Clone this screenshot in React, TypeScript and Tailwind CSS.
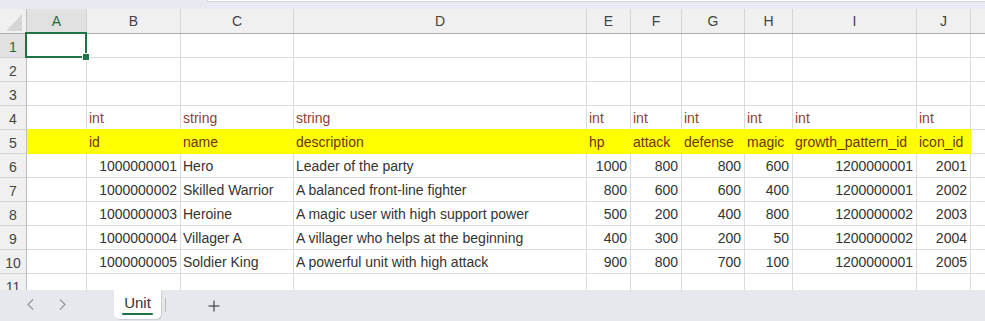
import React from "react";

type Col = { letter: string; w: string };

const cols: Col[] = [
  { letter: "A", w: "w-[60px]" },
  { letter: "B", w: "w-[94px]" },
  { letter: "C", w: "w-[113px]" },
  { letter: "D", w: "w-[293px]" },
  { letter: "E", w: "w-[44px]" },
  { letter: "F", w: "w-[51px]" },
  { letter: "G", w: "w-[63px]" },
  { letter: "H", w: "w-[48px]" },
  { letter: "I", w: "w-[124px]" },
  { letter: "J", w: "w-[54px]" },
];

const types = ["", "int", "string", "string", "int", "int", "int", "int", "int", "int"];
const names = ["", "id", "name", "description", "hp", "attack", "defense", "magic", "growth_pattern_id", "icon_id"];

const data: string[][] = [
  ["", "1000000001", "Hero", "Leader of the party", "1000", "800", "800", "600", "1200000001", "2001"],
  ["", "1000000002", "Skilled Warrior", "A balanced front-line fighter", "800", "600", "600", "400", "1200000001", "2002"],
  ["", "1000000003", "Heroine", "A magic user with high support power", "500", "200", "400", "800", "1200000002", "2003"],
  ["", "1000000004", "Villager A", "A villager who helps at the beginning", "400", "300", "200", "50", "1200000002", "2004"],
  ["", "1000000005", "Soldier King", "A powerful unit with high attack", "900", "800", "700", "100", "1200000001", "2005"],
];

const rightCols = new Set([1, 4, 5, 6, 7, 8, 9]);

function RowHeader({ n, selected, short }: { n: number; selected?: boolean; short?: boolean }) {
  return (
    <div
      className={
        "w-[27px] shrink-0 border-r border-r-[#bfbfbf] text-center " +
        (short ? "h-[16px] leading-[26px] " : "h-[24px] border-b border-b-[#d4d4d4] leading-[26px] ") +
        (selected ? "bg-[#e1e1e1] text-[#1d6b40]" : "bg-[#f0f0f0] text-[#444444]")
      }
    >
      {n}
    </div>
  );
}

function Row({
  n,
  values,
  kind,
}: {
  n: number;
  values: string[];
  kind: "blank" | "type" | "name" | "data" | "short";
}) {
  return (
    <div className="flex">
      <RowHeader n={n} selected={n === 1} short={kind === "short"} />
      {cols.map((c, i) => {
        const right = kind === "data" && rightCols.has(i);
        let cls =
          c.w +
          " shrink-0 border-r whitespace-nowrap overflow-visible " +
          (n === 1 && i === 0 ? "relative " : "") +
          (kind === "short" ? "h-[16px] " : "h-[24px] border-b ");
        if (kind === "name") {
          cls += "bg-[#ffff00] border-[#ffff00] text-[#6e3413] ";
        } else if (kind === "type") {
          cls += "border-r-[#dadada] border-b-[#ffff00] text-[#8f3f33] ";
        } else {
          cls += "border-[#dadada] text-[#333333] ";
        }
        cls += right ? "text-right pr-[3px] " : "pl-[2px] ";
        return (
          <div key={c.letter} className={cls}>
            <span className="leading-[25px] block">{values[i]}</span>
            {n === 1 && i === 0 && (
              <>
                <div className="absolute z-10 left-[-2px] top-[-2px] w-[62px] h-[26px] border-2 border-[#217346] pointer-events-none" />
                <div className="absolute z-20 left-[55px] top-[19px] w-[8px] h-[8px] bg-[#217346] border border-white" />
              </>
            )}
          </div>
        );
      })}
      <div
        className={
          "w-[14px] shrink-0 " + (kind === "short" ? "h-[16px]" : "h-[24px] border-b border-[#dadada]")
        }
      />
    </div>
  );
}

export default function App() {
  const empty = new Array(10).fill("");
  return (
    <div className="w-[985px] h-[321px] overflow-hidden bg-white font-['Liberation_Sans',Arial,sans-serif] text-[14px] flex flex-col">
      {/* top strip */}
      <div className="h-[9px] bg-[#e7eaf0] flex shrink-0">
        <div className="ml-[207px] flex-1 h-[2px] bg-white border-b border-l border-[#cfd2d8] rounded-bl-[3px]" />
      </div>

      {/* column headers */}
      <div className="flex h-[25px] shrink-0 border-b border-[#ababab] bg-[#f0f0f0]">
        <div className="w-[27px] shrink-0 border-r border-r-[#bfbfbf] flex items-end justify-end pr-[4px] pb-[2px]">
          <svg width="16" height="17" viewBox="0 0 16 17">
            <polygon points="16,0 16,17 0,17" fill="#d6d6d6" />
          </svg>
        </div>
        {cols.map((c, i) => (
          <div
            key={c.letter}
            className={
              c.w +
              " shrink-0 border-r border-[#d5d5d5] text-center leading-[24px] " +
              (i === 0 ? "bg-[#e1e1e1] text-[#1d6b40]" : "text-[#444444]")
            }
          >
            {c.letter}
          </div>
        ))}
        <div className="w-[14px] shrink-0" />
      </div>

      <Row n={1} values={empty} kind="blank" />
      <Row n={2} values={empty} kind="blank" />
      <Row n={3} values={empty} kind="blank" />
      <Row n={4} values={types} kind="type" />
      <Row n={5} values={names} kind="name" />
      {data.map((d, i) => (
        <Row key={i} n={6 + i} values={d} kind="data" />
      ))}
      <Row n={11} values={empty} kind="short" />

      {/* sheet tab bar */}
      <div className="h-[31px] shrink-0 bg-[#e6e8ee] flex items-start">
        <div className="w-[114px] flex items-center h-[30px] shrink-0">
          <div className="w-[27px]" />
          <svg width="7" height="11" viewBox="0 0 7 11" className="mt-[-1px]">
            <polyline points="6,0.5 1,5.5 6,10.5" fill="none" stroke="#9a9a9a" strokeWidth="1.3" />
          </svg>
          <div className="w-[25px]" />
          <svg width="7" height="11" viewBox="0 0 7 11" className="mt-[-1px]">
            <polyline points="1,0.5 6,5.5 1,10.5" fill="none" stroke="#9a9a9a" strokeWidth="1.3" />
          </svg>
        </div>
        <div className="w-[47px] h-[29px] bg-white rounded-b-[5px] shadow-[1px_1px_1px_rgba(0,0,0,0.12)] flex flex-col items-center shrink-0">
          <span className="text-[15px] text-[#333333] leading-[18px] mt-[4px]">Unit</span>
          <div className="w-[31px] h-[2px] bg-[#1e7145] rounded-full mt-[1px]" />
        </div>
        <div className="w-px h-[14px] bg-[#bdbdbd] ml-[4px] mt-[8px]" />
        <div className="ml-[42px] mt-[10px]">
          <svg width="12" height="12" viewBox="0 0 12 12">
            <line x1="6" y1="0.5" x2="6" y2="11.5" stroke="#444" strokeWidth="1.2" />
            <line x1="0.5" y1="6" x2="11.5" y2="6" stroke="#444" strokeWidth="1.2" />
          </svg>
        </div>
      </div>
    </div>
  );
}
